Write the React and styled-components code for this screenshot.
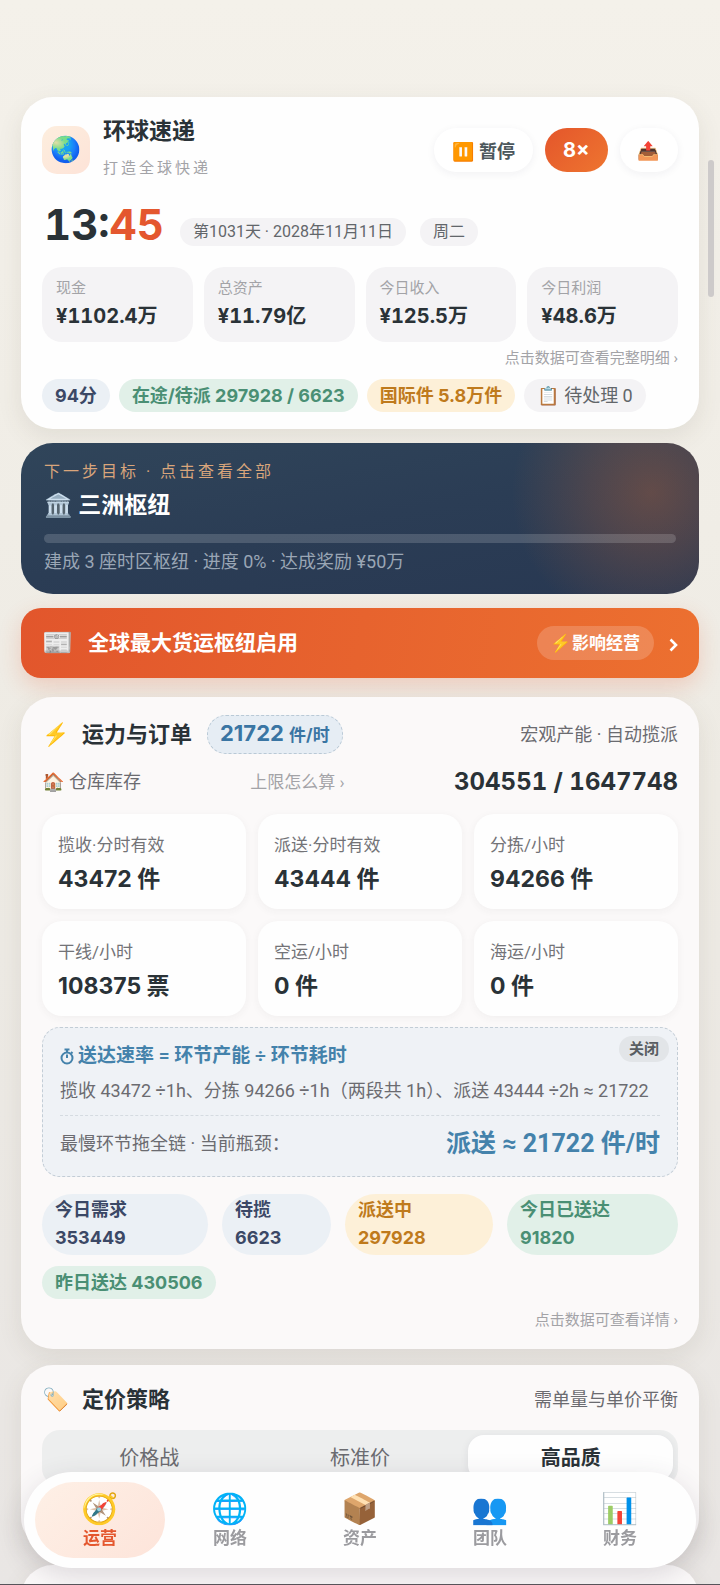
import React, { useState } from "react";
import styled, { createGlobalStyle, css } from "styled-components";

const textFont = `Roboto, "Noto Sans CJK SC", "Noto Color Emoji", sans-serif`;
const numFont = `Inter, "Noto Sans CJK SC", "Noto Color Emoji", sans-serif`;

const GlobalStyle = createGlobalStyle`
  * {
    box-sizing: border-box;
  }
  body {
    margin: 0;
    background: #efece5;
    color: #2a3237;
    font-family: ${textFont};
  }
  button {
    margin: 0;
    padding: 0;
    border: none;
    background: none;
    color: inherit;
    font: inherit;
    text-align: left;
    cursor: pointer;
  }
  h1, h2, p, dl, dt, dd {
    margin: 0;
  }
`;

const Page = styled.div`
  height: 100vh;
  overflow-y: auto;
  scrollbar-width: none;
  background: linear-gradient(180deg, #f4f1ea 0%, #eeebe4 50%, #e9e6e4 100%);
`;

const Main = styled.main`
  display: flex;
  flex-direction: column;
  padding: 97px 21px 0;
`;

const Card = styled.section`
  padding: 17px 21px;
  border-radius: 32px;
  background: #fefefe;
  box-shadow: 0 8px 24px rgba(90, 80, 60, 0.1);
`;

const SoftCard = styled(Card)`
  margin-top: ${(p) => p.$gap || 16}px;
  padding: 18px 21px;
  background: #fbf9f9;
  min-height: ${(p) => (p.$min ? p.$min + "px" : "auto")};
`;

const Row = styled.div`
  display: flex;
  align-items: center;
  justify-content: space-between;
`;

/* 顶部 */
const Brand = styled.div`
  display: flex;
  align-items: center;
  gap: 13px;
`;

const Logo = styled.div`
  width: 48px;
  height: 48px;
  border-radius: 15px;
  background: linear-gradient(135deg, #fdeede, #fde3d8);
  font-size: 25px;
  line-height: 48px;
  text-align: center;
`;

const BrandName = styled.h1`
  font-size: 23px;
  line-height: 36px;
  font-weight: 700;
`;

const Slogan = styled.p`
  font-size: 15px;
  line-height: 36px;
  letter-spacing: 3px;
  color: #a3a3a7;
`;

const Controls = styled.div`
  display: flex;
  gap: 12px;
`;

const RoundButton = styled.button`
  height: 44px;
  padding: 0 18px;
  border-radius: 22px;
  background: #fff;
  box-shadow: 0 2px 8px rgba(40, 40, 60, 0.06);
  font-family: ${numFont};
  font-size: 18px;
  font-weight: 700;
  color: #4c575c;
  white-space: nowrap;

  ${(p) =>
    p.$hot &&
    css`
      background: linear-gradient(135deg, #e4562b, #ee7530);
      box-shadow: none;
      color: #fff;
      font-size: 20px;
    `}
`;

const ClockRow = styled.div`
  display: flex;
  align-items: flex-end;
  gap: 14px;
  margin-top: 18px;
`;

const Clock = styled.time`
  padding: 0 2px;
  font-family: ${numFont};
  font-size: 42px;
  line-height: 42px;
  font-weight: 700;
  font-variant-numeric: tabular-nums;

  span {
    color: #e4572e;
  }
`;

const DatePill = styled.span`
  padding: 0 13px;
  border-radius: 14px;
  background: #f4f3f5;
  font-size: 16px;
  line-height: 28px;
  color: #62666a;
`;

const StatGrid = styled.div`
  display: grid;
  grid-template-columns: repeat(4, 1fr);
  gap: 11px;
  margin-top: 21px;
`;

const Stat = styled.button`
  padding: 9px 14px 10px;
  border-radius: 20px;
  background: #f4f3f5;
`;

const StatLabel = styled.div`
  font-size: 15px;
  line-height: 24px;
  color: #a3a3a7;
`;

const StatValue = styled.div`
  font-family: ${numFont};
  font-size: 20px;
  line-height: 32px;
  font-weight: 700;
  font-variant-numeric: tabular-nums;
  white-space: nowrap;
`;

const Hint = styled.p`
  margin-top: ${(p) => p.$gap}px;
  font-size: 15px;
  line-height: 22px;
  text-align: right;
  color: #a3a3a7;
`;

const Chips = styled.div`
  display: flex;
  gap: 9px;
  margin-top: 10px;
`;

const tones = {
  blue: ["#ebf0f5", "#3b4866"],
  green: ["#e1f0e8", "#4a8f74"],
  amber: ["#fdf0d8", "#bf7a1c"],
  gray: ["#f4f3f5", "#62666a"],
};

const Chip = styled.button`
  padding: 0 13px;
  border-radius: 17px;
  background: ${(p) => tones[p.$tone][0]};
  color: ${(p) => tones[p.$tone][1]};
  font-family: ${(p) => (p.$tone === "gray" ? textFont : numFont)};
  font-size: 18px;
  line-height: 33px;
  font-weight: ${(p) => (p.$tone === "gray" ? 400 : 700)};
  white-space: nowrap;
`;

/* 目标 */
const Goal = styled.button`
  margin-top: 14px;
  padding: 17px 23px 19px;
  border-radius: 32px;
  background: radial-gradient(
      circle at 93% 33%,
      rgba(228, 110, 46, 0.3),
      rgba(228, 110, 46, 0.18) 60px,
      rgba(228, 110, 46, 0) 140px
    ),
    linear-gradient(170deg, #30455a 0%, #2b3d55 50%, #283852 100%);
  color: #fff;
`;

const GoalTag = styled.div`
  font-size: 16px;
  line-height: 24px;
  letter-spacing: 3px;
  color: #d9a57b;
`;

const GoalName = styled.h2`
  margin-top: 4px;
  font-size: 23px;
  line-height: 36px;
  font-weight: 700;
`;

const Track = styled.div`
  height: 9px;
  margin-top: 10px;
  border-radius: 5px;
  background: rgba(255, 255, 255, 0.16);
  overflow: hidden;
`;

const Fill = styled.div`
  height: 100%;
  background: #f4a261;
`;

const GoalText = styled.p`
  margin-top: 6px;
  font-size: 18px;
  line-height: 26px;
  color: #9aa6b5;
`;

/* 新闻 */
const News = styled.button`
  display: flex;
  align-items: center;
  margin-top: 14px;
  padding: 18px 21px;
  border-radius: 20px;
  background: linear-gradient(100deg, #e2562c, #ec7030);
  box-shadow: 0 8px 22px rgba(228, 87, 46, 0.22);
  color: #fff;
`;

const NewsIcon = styled.span`
  width: 46px;
  font-size: 25px;
  line-height: 34px;
`;

const NewsTitle = styled.span`
  flex: 1;
  font-size: 21px;
  line-height: 34px;
  font-weight: 700;
`;

const NewsTag = styled.span`
  padding: 0 14px;
  border-radius: 17px;
  background: rgba(255, 255, 255, 0.18);
  font-size: 17px;
  line-height: 34px;
  font-weight: 700;
`;

const ChevronIcon = styled.svg`
  margin: 4px 0 0 15px;
`;

/* 运力 */
const Heading = styled.h2`
  display: flex;
  align-items: center;
  font-size: 22px;
  line-height: 34px;
  font-weight: 700;
`;

const HeadIcon = styled.span`
  width: 40px;
  font-size: 22px;
  font-weight: 400;
`;

const RatePill = styled.button`
  margin-left: 15px;
  padding: 0 12px;
  border: 1px dashed #b9c9d6;
  border-radius: 19px;
  background: #e6edf4;
  font-family: ${numFont};
  font-size: 22px;
  line-height: 35px;
  font-weight: 700;
  color: #3a75a3;

  small {
    font-size: 17px;
  }
`;

const Note = styled.span`
  font-size: 18px;
  line-height: 32px;
  color: #6b6b70;
`;

const StockRow = styled(Row)`
  margin-top: 12px;
`;

const Link = styled.button`
  font-size: 17px;
  line-height: 32px;
  color: #a3a3a7;
`;

const StockValue = styled.strong`
  font-family: ${numFont};
  font-size: 24px;
  line-height: 32px;
  font-weight: 700;
  font-variant-numeric: tabular-nums;
`;

const TileGrid = styled.dl`
  display: grid;
  grid-template-columns: repeat(3, 1fr);
  gap: 12px;
  margin-top: 16px;
`;

const Tile = styled.div`
  padding: 18px 16px 13px;
  border-radius: 20px;
  background: #fefefe;
  box-shadow: 0 2px 8px rgba(60, 50, 60, 0.05);

  dt {
    font-size: 17px;
    line-height: 26px;
    color: #737377;
  }
  dd {
    margin-top: 4px;
    font-family: ${numFont};
    font-size: 23px;
    line-height: 34px;
    font-weight: 700;
  }
`;

const Formula = styled.div`
  position: relative;
  margin-top: 11px;
  padding: 13px 17px 14px;
  border: 1px dashed #c3cdd6;
  border-radius: 18px;
  background: #eff2f6;
`;

const CloseButton = styled.button`
  position: absolute;
  top: 8px;
  right: 8px;
  padding: 0 10px;
  border-radius: 13px;
  background: #e2e5e8;
  font-size: 15px;
  line-height: 26px;
  font-weight: 700;
  color: #585d62;
`;

const FormulaTitle = styled.p`
  display: flex;
  align-items: center;
  gap: 4px;
  font-size: 19px;
  line-height: 30px;
  font-weight: 700;
  color: #4482ab;
`;

const FormulaText = styled.p`
  margin-top: 5px;
  font-size: 18px;
  line-height: 30px;
  color: #6b6b70;
  white-space: nowrap;
`;

const FormulaFoot = styled(Row)`
  margin-top: 9px;
  padding-top: 10px;
  border-top: 1px dashed #d5dbe1;

  strong {
    font-size: 25px;
    line-height: 36px;
    color: #4482ab;
  }
`;

const FlowGrid = styled.div`
  display: grid;
  grid-template-columns: 166fr 109fr 148fr 171fr;
  gap: 14px;
  margin: 17px 0 11px;
`;

const FlowPill = styled(Chip)`
  padding: 2px 13px 3px;
  border-radius: 31px;
  line-height: 28px;
`;

/* 定价 */
const Segments = styled.div`
  display: grid;
  grid-template-columns: repeat(3, 1fr);
  gap: 6px;
  margin-top: 13px;
  padding: 5px;
  border-radius: 18px;
  background: #edeeee;
`;

const Segment = styled.button`
  border-radius: 16px;
  font-size: 20px;
  line-height: 46px;
  text-align: center;
  color: #6b6b70;

  ${(p) =>
    p.$active &&
    css`
      background: #fefefe;
      box-shadow: 0 2px 8px rgba(40, 40, 60, 0.08);
      color: #2a3237;
      font-weight: 700;
    `}
`;

/* 底部导航 */
const Nav = styled.nav`
  position: fixed;
  left: 24px;
  right: 24px;
  bottom: 17px;
  display: grid;
  grid-template-columns: repeat(5, 1fr);
  padding: 10px 11px;
  border-radius: 48px;
  background: #fefefe;
  box-shadow: 0 8px 28px rgba(60, 50, 70, 0.16);
`;

const NavItem = styled.button`
  display: flex;
  flex-direction: column;
  align-items: center;
  height: 76px;
  border-radius: 38px;
  font-size: 17px;
  font-weight: 700;
  color: ${(p) => (p.$active ? "#e4572e" : "#9b9b9f")};
  background: ${(p) => (p.$active ? "linear-gradient(135deg, #fef0e6, #fde4da)" : "none")};
`;

const NavIcon = styled.span`
  margin-top: 8px;
  font-size: 30px;
  line-height: 38px;
  font-weight: 400;
`;

const NavLabel = styled.span`
  line-height: 20px;
`;

const ScrollThumb = styled.div`
  position: fixed;
  top: 160px;
  right: 6px;
  width: 6px;
  height: 137px;
  border-radius: 3px;
  background: #cdcaca;
`;

const BottomEdge = styled.div`
  position: fixed;
  left: 0;
  right: 0;
  bottom: 0;
  height: 1px;
  background: #57545a;
`;

const stats = [
  ["现金", "¥1102.4万"],
  ["总资产", "¥11.79亿"],
  ["今日收入", "¥125.5万"],
  ["今日利润", "¥48.6万"],
];

const tiles = [
  ["揽收·分时有效", "43472 件"],
  ["派送·分时有效", "43444 件"],
  ["分拣/小时", "94266 件"],
  ["干线/小时", "108375 票"],
  ["空运/小时", "0 件"],
  ["海运/小时", "0 件"],
];

const flows = [
  ["今日需求", "353449", "blue"],
  ["待揽", "6623", "blue"],
  ["派送中", "297928", "amber"],
  ["今日已送达", "91820", "green"],
];

const tabs = [
  ["🧭", "运营"],
  ["🌐", "网络"],
  ["📦", "资产"],
  ["👥", "团队"],
  ["📊", "财务"],
];

const Stopwatch = () => (
  <svg width="14" height="17" viewBox="0 0 14 17" fill="none" stroke="currentColor" strokeWidth="2">
    <circle cx="7" cy="10" r="5.5" />
    <path d="M4.5 1.5h5M7 1.5v3M7 6.5V10" />
    <path d="M11 4l1.5 1.5" />
  </svg>
);

const Header = () => (
  <Card>
    <Row>
      <Brand>
        <Logo>🌏</Logo>
        <div>
          <BrandName>环球速递</BrandName>
          <Slogan>打造全球快递</Slogan>
        </div>
      </Brand>
      <Controls>
        <RoundButton>⏸️ 暂停</RoundButton>
        <RoundButton $hot>8×</RoundButton>
        <RoundButton aria-label="导出">📤</RoundButton>
      </Controls>
    </Row>
    <ClockRow>
      <Clock>
        13:<span>45</span>
      </Clock>
      <DatePill>第1031天 · 2028年11月11日</DatePill>
      <DatePill>周二</DatePill>
    </ClockRow>
    <StatGrid>
      {stats.map(([label, value]) => (
        <Stat key={label}>
          <StatLabel>{label}</StatLabel>
          <StatValue>{value}</StatValue>
        </Stat>
      ))}
    </StatGrid>
    <Hint $gap={5}>点击数据可查看完整明细 ›</Hint>
    <Chips>
      <Chip $tone="blue">94分</Chip>
      <Chip $tone="green">在途/待派 297928 / 6623</Chip>
      <Chip $tone="amber">国际件 5.8万件</Chip>
      <Chip $tone="gray">📋 待处理 0</Chip>
    </Chips>
  </Card>
);

const Capacity = () => {
  const [open, setOpen] = useState(true);

  return (
    <SoftCard $gap={19}>
      <Row>
        <Heading>
          <HeadIcon>⚡</HeadIcon>
          运力与订单
          <RatePill onClick={() => setOpen(true)}>
            21722 <small>件/时</small>
          </RatePill>
        </Heading>
        <Note>宏观产能 · 自动揽派</Note>
      </Row>
      <StockRow>
        <Note>🏠 仓库库存</Note>
        <Link onClick={() => setOpen(true)}>上限怎么算 ›</Link>
        <StockValue>304551 / 1647748</StockValue>
      </StockRow>
      <TileGrid>
        {tiles.map(([label, value]) => (
          <Tile key={label}>
            <dt>{label}</dt>
            <dd>{value}</dd>
          </Tile>
        ))}
      </TileGrid>
      {open && (
        <Formula>
          <CloseButton onClick={() => setOpen(false)}>关闭</CloseButton>
          <FormulaTitle>
            <Stopwatch />
            送达速率 = 环节产能 ÷ 环节耗时
          </FormulaTitle>
          <FormulaText>揽收 43472 ÷1h、分拣 94266 ÷1h（两段共 1h）、派送 43444 ÷2h ≈ 21722</FormulaText>
          <FormulaFoot>
            <Note>最慢环节拖全链 · 当前瓶颈：</Note>
            <strong>派送 ≈ 21722 件/时</strong>
          </FormulaFoot>
        </Formula>
      )}
      <FlowGrid>
        {flows.map(([label, value, tone]) => (
          <FlowPill key={label} $tone={tone}>
            {label}
            <br />
            {value}
          </FlowPill>
        ))}
      </FlowGrid>
      <Chip $tone="green">昨日送达 430506</Chip>
      <Hint $gap={10}>点击数据可查看详情 ›</Hint>
    </SoftCard>
  );
};

const Pricing = () => {
  const [plan, setPlan] = useState("高品质");

  return (
    <SoftCard $min={184}>
      <Row>
        <Heading>
          <HeadIcon>🏷️</HeadIcon>
          定价策略
        </Heading>
        <Note>需单量与单价平衡</Note>
      </Row>
      <Segments>
        {["价格战", "标准价", "高品质"].map((name) => (
          <Segment key={name} $active={plan === name} onClick={() => setPlan(name)}>
            {name}
          </Segment>
        ))}
      </Segments>
    </SoftCard>
  );
};

const App = () => {
  const [tab, setTab] = useState("运营");
  const progress = 0;

  return (
    <Page>
      <GlobalStyle />
      <Main>
        <Header />
        <Goal>
          <GoalTag>下一步目标 · 点击查看全部</GoalTag>
          <GoalName>🏛️ 三洲枢纽</GoalName>
          <Track>
            <Fill style={{ width: `${progress}%` }} />
          </Track>
          <GoalText>建成 3 座时区枢纽 · 进度 {progress}% · 达成奖励 ¥50万</GoalText>
        </Goal>
        <News>
          <NewsIcon>📰</NewsIcon>
          <NewsTitle>全球最大货运枢纽启用</NewsTitle>
          <NewsTag>⚡影响经营</NewsTag>
          <ChevronIcon width="9" height="14" viewBox="0 0 9 14" fill="none" stroke="#fff" strokeWidth="2.6">
            <path d="M1.5 1.5L7 7l-5.500 5.500" />
          </ChevronIcon>
        </News>
        <Capacity />
        <Pricing />
        <SoftCard $min={120} />
      </Main>
      <Nav>
        {tabs.map(([icon, name]) => (
          <NavItem key={name} $active={tab === name} onClick={() => setTab(name)}>
            <NavIcon>{icon}</NavIcon>
            <NavLabel>{name}</NavLabel>
          </NavItem>
        ))}
      </Nav>
      <ScrollThumb />
      <BottomEdge />
    </Page>
  );
};

export default App;
